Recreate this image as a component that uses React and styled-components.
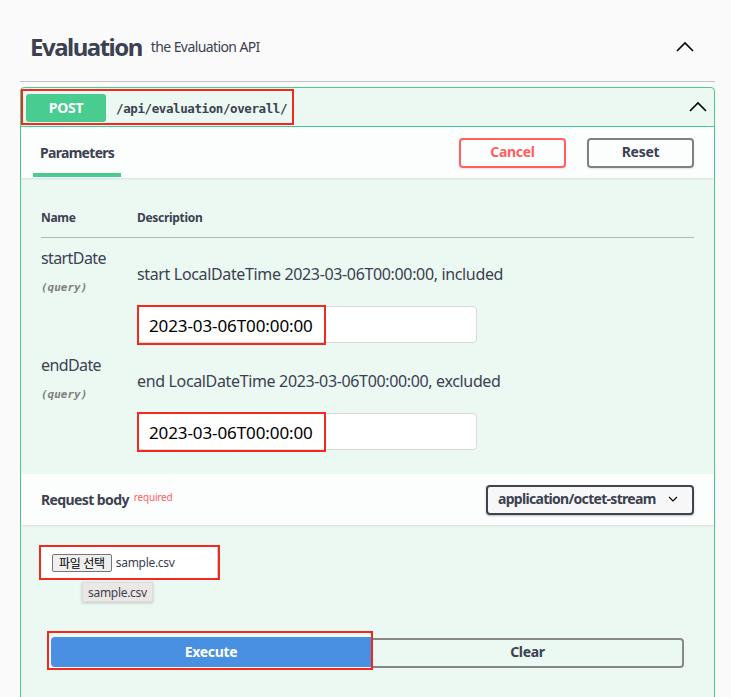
import React from "react";
import styled, { createGlobalStyle } from "styled-components";

const Global = createGlobalStyle`
  html, body { margin: 0; padding: 0; background: #fafafa; }
  body { font-family: "Noto Sans", "Noto Sans CJK KR", sans-serif; color: #3b4151; }
  * { box-sizing: border-box; }
`;

const Page = styled.div`
  width: 731px;
  height: 697px;
  overflow: hidden;
  padding: 0 16px 0 20px;
`;

const TagHeader = styled.div`
  display: flex;
  align-items: center;
  height: 82px;
  padding: 12px 20px 0 10px;
  border-bottom: 1px solid rgba(59, 65, 81, 0.3);
`;

const TagTitle = styled.h3`
  margin: 0;
  font-size: 24px;
  font-weight: 700;
  letter-spacing: -1.5px;
`;

const TagDesc = styled.span`
  margin-left: 9px;
  font-size: 14px;
  flex: 1;
  letter-spacing: -0.6px;
`;

const Chevron = ({ size = 20, down }) => (
  <svg width={size} height={size} viewBox="0 0 20 20" style={{ transform: down ? "rotate(180deg)" : "none" }}>
    <path d="M2 14 L10 6 L18 14" fill="none" stroke="#000" strokeWidth={down ? 2.4 : 1.6} />
  </svg>
);

const Opblock = styled.div`
  margin-top: 5px;
  border: 1px solid #49cc90;
  border-radius: 4px;
  background: #ecf8f2;
  height: 700px;
`;

const Summary = styled.div`
  display: flex;
  align-items: center;
  height: 39px;
  padding: 0 6px 0 0;
  border-bottom: 1px solid #49cc90;
`;

const Highlight = styled.div`
  display: flex;
  align-items: center;
  border: 2px solid #f2291c;
  padding: ${(p) => p.$pad || "0"};
`;

const Method = styled.span`
  width: 80px;
  height: 28px;
  border-radius: 3px;
  background: #49cc90;
  color: #fff;
  font-weight: 700;
  font-size: 14px;
  display: flex;
  align-items: center;
  justify-content: center;
  padding-bottom: 2px;
  letter-spacing: -0.3px;
`;

const Path = styled.span`
  font-family: "DejaVu Sans Mono", monospace;
  font-weight: 700;
  font-size: 12.5px;
  margin: 0 0 0 10px;
  letter-spacing: -0.4px;
`;

const Spacer = styled.div`
  flex: 1;
`;

const TabHeader = styled.div`
  display: flex;
  align-items: center;
  height: 51px;
  padding: 0 20px 0 12px;
  background: rgba(255, 255, 255, 0.85);
  box-shadow: 0 1px 2px rgba(0, 0, 0, 0.1);
`;

const Tab = styled.div`
  align-self: stretch;
  display: flex;
  align-items: center;
  padding: 4px 7px 0 7px;
  font-size: 14px;
  font-weight: 700;
  letter-spacing: -0.7px;
  border-bottom: 4px solid #49cc90;
  margin-bottom: 1px;
`;

const Btn = styled.button`
  width: 107px;
  height: 30px;
  border-radius: 4px;
  background: transparent;
  font-family: inherit;
  font-size: 14px;
  font-weight: 700;
  letter-spacing: -0.3px;
  border: 2px solid ${(p) => (p.$danger ? "#ff6060" : "#808080")};
  color: ${(p) => (p.$danger ? "#ff6060" : "#3b4151")};
  margin-left: ${(p) => p.$ml || 0}px;
  box-shadow: 0 1px 2px rgba(0, 0, 0, 0.1);
  padding: 0 0 2px;
`;

const Params = styled.div`
  padding: 31px 20px 24px 20px;
`;

const HeadRow = styled.div`
  display: flex;
  font-size: 12px;
  font-weight: 700;
  letter-spacing: -0.3px;
  padding-bottom: 11px;
  border-bottom: 1px solid rgba(59, 65, 81, 0.35);
`;

const NameCol = styled.div`
  width: 96px;
  flex-shrink: 0;
`;

const ParamRow = styled.div`
  display: flex;
  padding-top: ${(p) => p.$pt}px;
`;

const ParamName = styled.div`
  font-size: 16px;
  line-height: 20px;
  letter-spacing: -0.6px;
`;

const ParamIn = styled.div`
  font-family: "DejaVu Sans Mono", monospace;
  font-style: italic;
  font-weight: 700;
  font-size: 11px;
  color: #808080;
  margin-top: 13px;
`;

const DescCol = styled.div`
  padding-top: 15px;
  font-size: 16px;
  letter-spacing: -0.35px;
`;

const InputBox = styled.div`
  margin-top: 21px;
  width: 340px;
  height: 37px;
  background: #fff;
  border: 1px solid #d9d9d9;
  border-radius: 4px;
  display: flex;
  align-items: center;
  position: relative;
`;

const InputMark = styled.div`
  position: absolute;
  left: -1px;
  top: -2px;
  width: 189px;
  height: 40px;
  border: 2px solid #f2291c;
  display: flex;
  align-items: center;
  padding-left: 10px;
  font-size: 17px;
  color: #000;
  letter-spacing: -0.1px;
`;

const BodyHeader = styled.div`
  display: flex;
  align-items: center;
  height: 51px;
  padding: 0 20px;
  background: rgba(255, 255, 255, 0.85);
  box-shadow: 0 1px 2px rgba(0, 0, 0, 0.1);
`;

const BodyTitle = styled.span`
  font-size: 14px;
  font-weight: 700;
  letter-spacing: -0.6px;
`;

const Required = styled.sup`
  color: #ff6060;
  font-size: 10px;
  margin-left: 5px;
  position: relative;
  top: -3px;
  letter-spacing: -0.2px;
`;

const Select = styled.div`
  width: 208px;
  height: 30px;
  border: 2px solid #41444e;
  border-radius: 4px;
  background: #f7f7f7;
  box-shadow: 0 1px 2px rgba(0, 0, 0, 0.25);
  display: flex;
  align-items: center;
  justify-content: space-between;
  padding: 0 14px 2px 10px;
  font-size: 14px;
  font-weight: 700;
  letter-spacing: -0.7px;
`;

const BodyContent = styled.div`
  padding: 20px 0 0 18px;
`;

const FileWrap = styled.div`
  position: relative;
  width: 181px;
  height: 35px;
`;

const FileInput = styled.div`
  width: 177px;
  height: 31px;
  background: #fff;
  border-right: 1px solid #ccc;
  display: flex;
  align-items: center;
  padding-left: 11px;
  font-size: 12px;
  letter-spacing: -0.3px;
`;

const FileBtn = styled.span`
  height: 18px;
  padding: 0 6px;
  background: #efefef;
  border: 1px solid #767676;
  border-radius: 2px;
  display: flex;
  align-items: center;
  font-size: 12px;
  color: #000;
  margin-right: 4px;
`;

const Tooltip = styled.div`
  position: absolute;
  left: 43px;
  top: 37px;
  height: 20px;
  padding: 0 5px;
  display: flex;
  align-items: center;
  background: #ebe7e4;
  border: 1px solid #ddd;
  box-shadow: 0 1px 3px rgba(0, 0, 0, 0.2);
  font-size: 12px;
  letter-spacing: -0.3px;
  white-space: nowrap;
`;

const ExecRow = styled.div`
  display: flex;
  align-items: center;
  margin: 51px 0 0 8px;
`;

const ExecMark = styled.div`
  border: 2px solid #f2291c;
  padding: 4px 0 1px 2px;
`;

const Execute = styled.button`
  width: 320px;
  height: 30px;
  background: #4990e2;
  border: none;
  border-radius: 4px 0 0 4px;
  color: #fff;
  font-family: inherit;
  font-size: 14px;
  font-weight: 700;
  letter-spacing: -0.3px;
  padding: 0 0 2px;
`;

const Clear = styled.button`
  width: 311px;
  height: 30px;
  background: transparent;
  border: 2px solid #888;
  border-left: none;
  border-radius: 0 4px 4px 0;
  color: #3b4151;
  font-family: inherit;
  font-size: 14px;
  font-weight: 700;
  letter-spacing: -0.3px;
  margin-top: 4px;
  padding: 0 0 2px;
`;

const params = [
  { name: "startDate", desc: "start LocalDateTime 2023-03-06T00:00:00, included", pt: 10 },
  { name: "endDate", desc: "end LocalDateTime 2023-03-06T00:00:00, excluded", pt: 12 },
];

export default function App() {
  return (
    <Page>
      <Global />
      <TagHeader>
        <TagTitle>Evaluation</TagTitle>
        <TagDesc>the Evaluation API</TagDesc>
        <Chevron />
      </TagHeader>
      <Opblock>
        <Summary>
          <Highlight $pad="3px 5px 1px 3px">
            <Method>POST</Method>
            <Path>/api/evaluation/overall/</Path>
          </Highlight>
          <Spacer />
          <Chevron />
        </Summary>
        <TabHeader>
          <Tab>Parameters</Tab>
          <Spacer />
          <Btn $danger>Cancel</Btn>
          <Btn $ml={21}>Reset</Btn>
        </TabHeader>
        <Params>
          <HeadRow>
            <NameCol>Name</NameCol>
            <div>Description</div>
          </HeadRow>
          {params.map((p) => (
            <ParamRow key={p.name} $pt={p.pt}>
              <NameCol>
                <ParamName>{p.name}</ParamName>
                <ParamIn>(query)</ParamIn>
              </NameCol>
              <div>
                <DescCol>{p.desc}</DescCol>
                <InputBox>
                  <InputMark>2023-03-06T00:00:00</InputMark>
                </InputBox>
              </div>
            </ParamRow>
          ))}
        </Params>
        <BodyHeader>
          <BodyTitle>Request body</BodyTitle>
          <Required>required</Required>
          <Spacer />
          <Select>
            application/octet-stream
            <Chevron size={10} down />
          </Select>
        </BodyHeader>
        <BodyContent>
          <FileWrap>
            <Highlight>
              <FileInput>
                <FileBtn>파일 선택</FileBtn>
                sample.csv
              </FileInput>
            </Highlight>
            <Tooltip>sample.csv</Tooltip>
          </FileWrap>
          <ExecRow>
            <ExecMark>
              <Execute>Execute</Execute>
            </ExecMark>
            <Clear>Clear</Clear>
          </ExecRow>
        </BodyContent>
      </Opblock>
    </Page>
  );
}
